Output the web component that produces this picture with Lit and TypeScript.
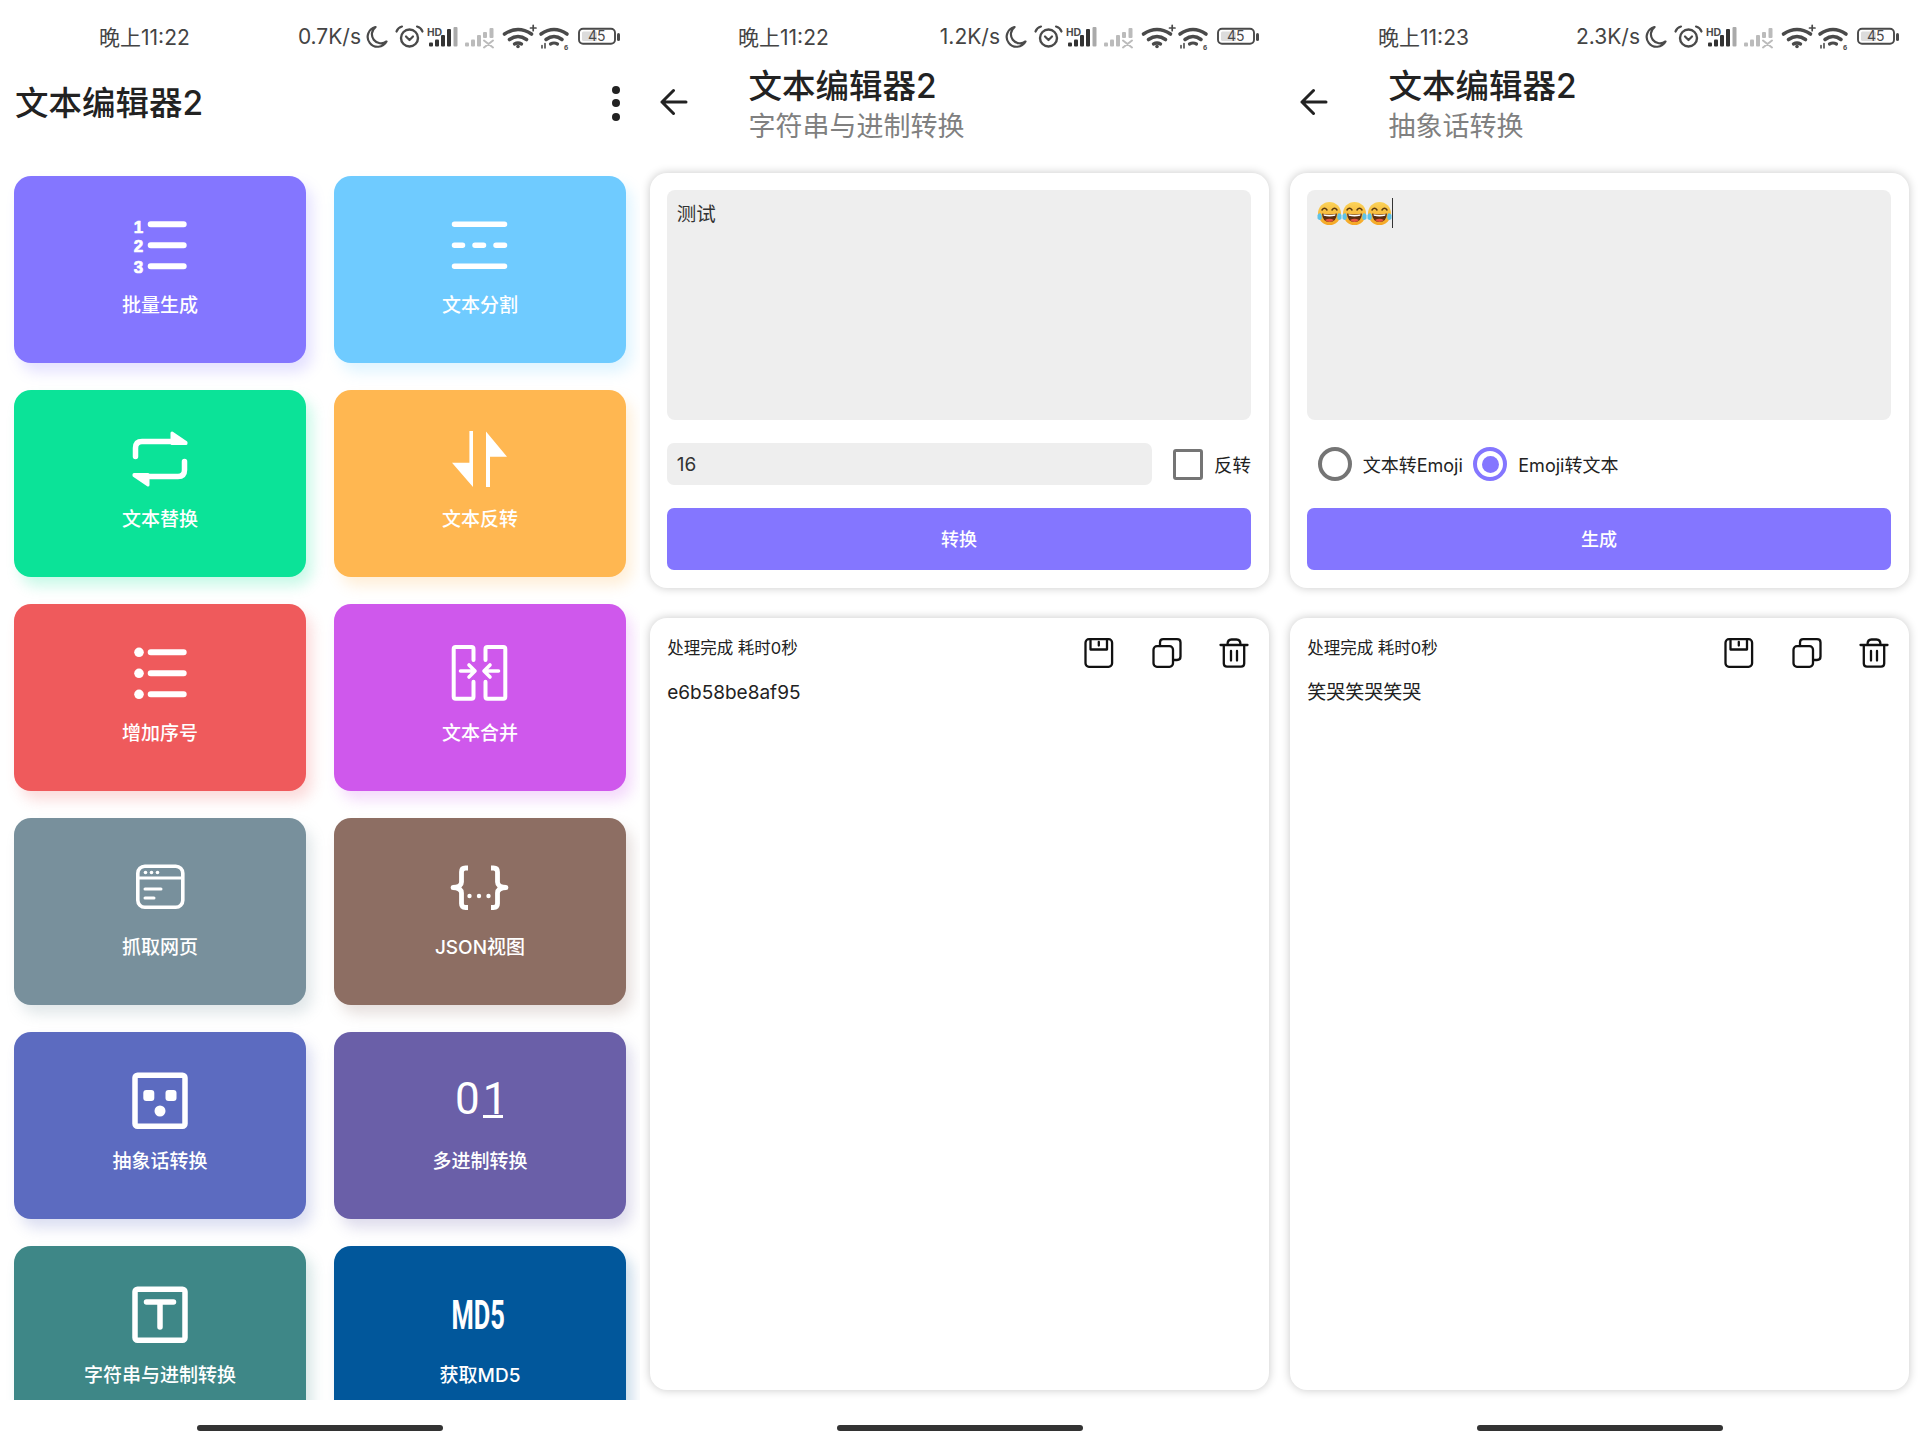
import { html, svg, css, LitElement, TemplateResult, SVGTemplateResult } from "lit";
import { customElement, property } from "lit/decorators.js";

const box = (body: SVGTemplateResult) => html`<svg class="icon" viewBox="0 0 72 72" fill="none" stroke="#fff" stroke-linecap="round" stroke-linejoin="round">${body}</svg>`;

const icons: Record<string, TemplateResult> = {
    numbered: box(svg`
        <path d="M26.7 16.3H59.7M26.7 37.3H59.7M26.7 58.3H59.7" stroke-width="6"/>
        <g fill="#fff" stroke="#fff" stroke-width="0.7" font-family="Liberation Sans" font-weight="700" font-size="17" text-anchor="middle">
            <text x="14.5" y="24.5">1</text><text x="14.5" y="44">2</text><text x="14.5" y="64.5">3</text>
        </g>`),
    split: box(svg`
        <path d="M10.5 16.3H60.5M10.5 58.3H60.5" stroke-width="5.5"/>
        <path d="M10.5 37.3H18.5M31 37.3H39.5M52 37.3H60.5" stroke-width="5.5"/>`),
    repeat: box(svg`
        <path d="M11.5 34.5V26Q11.5 19.5 18 19.5H50" stroke-width="5.5"/>
        <path d="M48 11L62 20.5V21.5H48Z" fill="#fff" stroke-width="3"/>
        <path d="M60.5 39.5V48Q60.5 54.5 54 54.5H22" stroke-width="5.5"/>
        <path d="M24 63L10 53.5V52.5H24Z" fill="#fff" stroke-width="3"/>`),
    swap: box(svg`
        <path d="M25.4 9H29V65L8 40.7H25.4Z" fill="#fff" stroke="none"/>
        <path d="M42 9.5L63 34.7H46V65H42Z" fill="#fff" stroke="none"/>`),
    bullets: box(svg`
        <path d="M26.7 16.3H59.7M26.7 37.3H59.7M26.7 58.3H59.7" stroke-width="6"/>
        <g fill="#fff" stroke="none"><circle cx="15" cy="16.3" r="4.8"/><circle cx="15" cy="37.3" r="4.8"/><circle cx="15" cy="58.3" r="4.8"/></g>`),
    merge: box(svg`
        <path d="M29.5 24V13Q29.5 11 27.5 11H11.7Q9.7 11 9.7 13V60.7Q9.7 62.7 11.7 62.7H27.5Q29.5 62.7 29.5 60.7V45.7" stroke-width="4"/>
        <path d="M41.5 24V13Q41.5 11 43.5 11H59.3Q61.3 11 61.3 13V60.7Q61.3 62.7 59.3 62.7H43.5Q41.5 62.7 41.5 60.7V45.7" stroke-width="4"/>
        <path d="M16.5 35H30M25 29L31 35L25 41M54.5 35H41M46 29L40 35L46 41" stroke-width="3.6"/>`),
    web: box(svg`
        <rect x="13.8" y="16.3" width="45" height="41" rx="7" stroke-width="3.6"/>
        <path d="M14 28H58.5" stroke-width="3"/>
        <g fill="#fff" stroke="none"><circle cx="21.5" cy="22.5" r="1.8"/><circle cx="27.5" cy="22.5" r="1.8"/><circle cx="33.5" cy="22.5" r="1.8"/></g>
        <path d="M21 39H37M21 48H30" stroke-width="3"/>`),
    braces: box(svg`
        <path d="M24 18H21.5Q17.5 18 17.5 22V32Q17.5 37 9 37.5Q17.5 38 17.5 43V53.5Q17.5 57.5 21.5 57.5H24" stroke-width="4.8" stroke-linecap="butt"/>
        <path d="M47 18H49.5Q53.5 18 53.5 22V32Q53.5 37 62 37.5Q53.5 38 53.5 43V53.5Q53.5 57.5 49.5 57.5H47" stroke-width="4.8" stroke-linecap="butt"/>
        <g fill="#fff" stroke="none"><circle cx="25.5" cy="46" r="2.2"/><circle cx="35" cy="46" r="2.2"/><circle cx="44.5" cy="46" r="2.2"/></g>`),
    face: box(svg`
        <rect x="11" y="11.2" width="50" height="51" rx="2.5" stroke-width="5.5"/>
        <g fill="#fff" stroke="none">
            <rect x="19.3" y="26" width="11" height="11" rx="3"/><rect x="41.5" y="26" width="11" height="11" rx="3"/><circle cx="36" cy="47" r="5.5"/>
        </g>`),
    binary: html`<div class="digits"><div>0</div><div class="one">1</div></div>`,
    textbox: box(svg`
        <rect x="11" y="11.2" width="50" height="51" rx="2.5" stroke-width="5.5"/>
        <path d="M22.5 24H49.5M36 24V49" stroke-width="5.5"/>`),
    md5: box(svg`
        <text transform="translate(7.5 51) scale(0.62 1)" fill="#fff" stroke="none" font-family="Roboto" font-weight="700" font-size="41">MD5</text>`),
};

const tools = [
    { label: "批量生成", color: "#8476ff", icon: "numbered" },
    { label: "文本分割", color: "#6fcbff", icon: "split" },
    { label: "文本替换", color: "#0be398", icon: "repeat" },
    { label: "文本反转", color: "#ffb751", icon: "swap" },
    { label: "增加序号", color: "#ef5a5c", icon: "bullets" },
    { label: "文本合并", color: "#cf58ec", icon: "merge" },
    { label: "抓取网页", color: "#78909c", icon: "web" },
    { label: "JSON视图", color: "#8d6e63", icon: "braces" },
    { label: "抽象话转换", color: "#5c6bc0", icon: "face" },
    { label: "多进制转换", color: "#6a5fa8", icon: "binary" },
    { label: "字符串与进制转换", color: "#3e8787", icon: "textbox" },
    { label: "获取MD5", color: "#01579b", icon: "md5" },
];

const statusIcons = html`
    <svg class="sys" viewBox="0 0 254 30" fill="none" stroke="#4a4a4a" stroke-linecap="round" stroke-linejoin="round">
        <path d="M9.5 5A10 10 0 1 0 20.5 19.5A9 9 0 0 1 9.5 5Z" stroke-width="2.2"/>
        <circle cx="43.5" cy="16" r="8.5" stroke-width="2.4"/>
        <path d="M30.5 9.5Q32 5.5 36 4.5M56.5 9.5Q55 5.5 51 4.5" stroke-width="2.2"/>
        <path d="M40 14.5L43.5 18L47 14.5" stroke-width="2.2"/>
        <text x="61" y="13.5" font-family="Liberation Sans" font-weight="700" font-size="10.5" fill="#4a4a4a" stroke="none">HD</text>
        <g stroke="none" fill="#333">
            <rect x="63" y="20.5" width="4" height="4" rx="1"/><rect x="69" y="17.5" width="4" height="7" rx="1"/>
            <rect x="75" y="13" width="4" height="11.5" rx="1"/><rect x="81" y="7" width="4" height="17.5" rx="1"/>
        </g>
        <rect x="87.5" y="5" width="4" height="19.5" rx="1" fill="#aaa" stroke="none"/>
        <g stroke="none" fill="#bbb">
            <rect x="99" y="20.5" width="4" height="4" rx="1"/><rect x="105" y="17.5" width="4" height="7" rx="1"/>
            <rect x="111" y="13" width="4" height="11.5" rx="1"/><rect x="117" y="10" width="4" height="6" rx="1"/>
            <rect x="123.5" y="6" width="4" height="10" rx="1"/>
        </g>
        <path d="M118 18.5L127 25.5M127 18.5L118 25.5" stroke="#bbb" stroke-width="2"/>
        <path d="M138.5 12Q152 3 165.5 12M143.5 17.5Q152 11.5 160.5 17.5" stroke-width="3.6"/>
        <path d="M148.5 22Q152 20 155.5 22" stroke-width="3.4"/>
        <circle cx="152" cy="24.5" r="1.8" fill="#4a4a4a" stroke="none"/>
        <path d="M164.5 6H170M167.2 3.3V8.7" stroke-width="1.7"/>
        <path d="M175 12Q188 3 201 12M180 17.5Q188 11.5 196 17.5" stroke-width="3.6"/>
        <path d="M184.5 22Q188 20 191.5 22" stroke-width="3.2"/>
        <path d="M176 26V23.5M179 26V21.5" stroke-width="1.6"/>
        <text x="198" y="27.5" font-family="Liberation Sans" font-weight="700" font-size="7.5" fill="#4a4a4a" stroke="none">6</text>
        <rect x="213" y="6.8" width="36" height="15" rx="4" stroke-width="1.9"/>
        <rect x="216" y="9.5" width="15" height="9.6" rx="1.5" fill="#dcdcdc" stroke="none"/>
        <text x="230.8" y="19.3" text-anchor="middle" font-family="Inter" font-size="14" fill="#4a4a4a" stroke="none">45</text>
        <rect x="251" y="11" width="3" height="8" rx="1.5" fill="#4a4a4a" stroke="none"/>
    </svg>`;

const backArrow = html`
    <svg class="back" viewBox="0 0 28 28" fill="none" stroke="#222" stroke-width="3" stroke-linecap="round" stroke-linejoin="round">
        <path d="M26 14H2M13.5 2.5L2 14L13.5 25.5"/>
    </svg>`;

const emoji = html`
    <svg class="emoji" viewBox="0 0 25 25">
        <defs><linearGradient id="g" x1="0" y1="0" x2="0" y2="1"><stop offset="0" stop-color="#fbd35a"/><stop offset="1" stop-color="#f5a623"/></linearGradient></defs>
        <circle cx="12.5" cy="12.5" r="11.5" fill="url(#g)"/>
        <path d="M5 9Q7.5 5.5 10 9M15 9Q17.5 5.5 20 9" fill="none" stroke="#5b3a10" stroke-width="1.5" stroke-linecap="round"/>
        <path d="M5 12.5Q12.5 14.5 20 12.5Q19.5 21 12.5 21Q5.5 21 5 12.5Z" fill="#5b2d0e"/>
        <path d="M6.5 13.2Q12.5 14.8 18.5 13.2L18.2 14.8Q12.5 16 6.8 14.8Z" fill="#fff"/>
        <path d="M8 19Q12.5 16.5 17 19Q15 21 12.5 21Q10 21 8 19Z" fill="#e5553f"/>
        <path d="M0.5 14Q2 11.5 3.8 12.5Q5.5 15 4.5 18Q2 20 0.5 17.5Z" fill="#5fc3e8"/>
        <path d="M24.5 14Q23 11.5 21.2 12.5Q19.5 15 20.5 18Q23 20 24.5 17.5Z" fill="#5fc3e8"/>
    </svg>`;

const actions = html`
    <div class="actions">
        <svg viewBox="0 0 30 30" fill="none" stroke="#111" stroke-width="2.3" stroke-linejoin="round" stroke-linecap="round">
            <rect x="1.5" y="1.2" width="26.6" height="27.6" rx="3.5"/>
            <path d="M6.5 1.5V11.5H23V1.5M14.8 4V7.5"/>
        </svg>
        <svg viewBox="0 0 30 30" fill="none" stroke="#111" stroke-width="2.3" stroke-linejoin="round" stroke-linecap="round">
            <rect x="1.5" y="8.2" width="19.5" height="20.6" rx="3.5"/>
            <path d="M8 8V4.5Q8 1.2 11.3 1.2H25Q28.5 1.2 28.5 4.5V18.5Q28.5 22 25 22H21.5"/>
        </svg>
        <svg viewBox="0 0 30 30" fill="none" stroke="#111" stroke-width="2.3" stroke-linejoin="round" stroke-linecap="round">
            <path d="M1.5 7H28.5M4.8 7.5V25.5Q4.8 28.6 8 28.6H22Q25.2 28.6 25.2 25.5V7.5M8.5 6.5Q8.5 1.5 12.5 1.5H17.5Q21.5 1.5 21.5 6.5"/>
            <path d="M12 13V22.5M18 13V22.5"/>
        </svg>
    </div>`;

@customElement("status-bar")
export class StatusBar extends LitElement {
    static styles = css`
        :host {
            display: flex;
            align-items: center;
            height: 42px;
            margin-top: 16px;
            padding: 0 20px 0 99px;
            color: #444;
            font-size: 21px;
            font-family: Inter, "Noto Sans CJK SC", sans-serif;
        }

        :host([sub]) {
            padding: 0 21px 0 98px;
        }

        span {
            margin-bottom: 2px;
        }

        .speed {
            margin-left: auto;
            margin-right: 5px;
        }

        .sys {
            width: 254px;
            height: 30px;
            flex: none;
        }
    `;

    @property() time = "";
    @property() speed = "";

    render() {
        return html`<span>${this.time}</span><span class="speed">${this.speed}</span>${statusIcons}`;
    }
}

@customElement("app-root")
export class AppRoot extends LitElement {
    static styles = css`
        :host {
            display: grid;
            grid-template-columns: repeat(3, 640px);
            height: 1440px;
            background: #fff;
            font-family: Inter, "Noto Sans CJK SC", sans-serif;
            color: #222;
        }

        .panel {
            display: flex;
            flex-direction: column;
            height: 1440px;
            overflow: hidden;
        }

        .home {
            align-self: center;
            width: 246px;
            height: 6px;
            flex: none;
            margin-top: auto;
            margin-bottom: 9.5px;
            border-radius: 3px;
            background: #333;
        }

        .toolbar {
            display: flex;
            align-items: center;
            justify-content: space-between;
            height: 90px;
            padding: 0 20px 0 15px;
            flex: none;
        }

        .title {
            font-size: 33.5px;
            line-height: 40px;
            font-weight: 500;
            color: #222;
        }

        .menu {
            display: flex;
            flex-direction: column;
            gap: 5.5px;
        }

        .menu i {
            width: 8px;
            height: 8px;
            border-radius: 50%;
            background: #222;
        }

        .grid {
            display: grid;
            grid-template-columns: 292px 292px;
            grid-auto-rows: 187px;
            gap: 27px 28px;
            height: 1252px;
            flex: none;
            box-sizing: border-box;
            padding: 28px 14px 0;
            overflow: hidden;
        }

        .tool {
            display: flex;
            flex-direction: column;
            align-items: center;
            box-sizing: border-box;
            padding-top: 32px;
            border-radius: 17px;
            color: #fff;
            background: var(--c);
            box-shadow: 6px 9px 14px color-mix(in srgb, var(--c) 22%, transparent);
        }

        .icon {
            width: 72px;
            height: 72px;
            flex: none;
        }

        .digits {
            display: flex;
            align-items: flex-start;
            gap: 3px;
            width: 72px;
            height: 72px;
            box-sizing: border-box;
            padding: 20px 0 0 11px;
            flex: none;
            font-family: Roboto, sans-serif;
            font-size: 44px;
            line-height: 31px;
        }

        .digits .one {
            width: 20px;
            border-bottom: 3px solid #fff;
            text-align: center;
        }

        .tool span {
            margin-top: 14px;
            font-size: 19px;
            line-height: 24px;
            font-weight: 500;
        }

        .head {
            display: flex;
            height: 87px;
            flex: none;
            padding-left: 20px;
        }

        .back {
            width: 28px;
            height: 28px;
            align-self: center;
            flex: none;
        }

        .names {
            margin-left: 60.5px;
            padding-top: 7.5px;
        }

        .sub {
            margin-top: 3.5px;
            font-size: 27px;
            line-height: 36px;
            color: #808080;
        }

        .card {
            margin: 0 11.4px 0 10px;
            box-sizing: border-box;
            border-radius: 17px;
            background: #fff;
            box-shadow: 0 0 10px rgba(0, 0, 0, 0.22);
            flex: none;
        }

        .form {
            display: flex;
            flex-direction: column;
            height: 415.4px;
            margin-top: 27.6px;
            padding: 17.5px 17.6px 0 17.2px;
        }

        .area {
            height: 230px;
            box-sizing: border-box;
            padding: 10px 10px 10px 9.5px;
            border-radius: 8px;
            background: #eee;
            font-size: 19.5px;
            line-height: 28px;
            color: #333;
        }

        .typed {
            display: flex;
            align-items: center;
            height: 26px;
        }

        .emoji {
            width: 25px;
            height: 25px;
            flex: none;
        }

        .caret {
            width: 1.5px;
            height: 30px;
            flex: none;
            background: #333;
        }

        .row {
            display: flex;
            align-items: center;
            height: 42px;
            margin-top: 23px;
        }

        .field {
            flex: 1;
            height: 42px;
            box-sizing: border-box;
            padding-left: 9.5px;
            border-radius: 7px;
            background: #eee;
            font-size: 19px;
            line-height: 44px;
            color: #333;
        }

        .check {
            width: 30px;
            height: 31px;
            box-sizing: border-box;
            margin-left: 21px;
            border: 3.6px solid #757575;
            border-radius: 3px;
            flex: none;
        }

        .row label {
            font-size: 18px;
            color: #222;
            flex: none;
        }

        .row .check + label {
            margin-left: 11.5px;
            font-size: 18.5px;
        }

        .radio {
            display: flex;
            align-items: center;
            justify-content: center;
            width: 34px;
            height: 34px;
            box-sizing: border-box;
            margin-left: 10.5px;
            border: 4px solid #757575;
            border-radius: 50%;
            flex: none;
        }

        .radio + label {
            margin-left: 11px;
        }

        .radio.on {
            border-color: #8476ff;
        }

        .radio.on i {
            width: 17px;
            height: 17px;
            border-radius: 50%;
            background: #8476ff;
        }

        .run {
            height: 61.5px;
            margin-top: 23px;
            border-radius: 7px;
            background: #8476ff;
            color: #fff;
            font-size: 18px;
            font-weight: 500;
            line-height: 63px;
            text-align: center;
        }

        .result {
            height: 772px;
            margin-top: 30px;
            padding: 18px 19.6px 0 17.2px;
        }

        .result-head {
            display: flex;
            align-items: flex-start;
            justify-content: space-between;
            height: 32px;
            margin-bottom: 10px;
        }

        .done {
            font-size: 16.5px;
            line-height: 24px;
            color: #222;
        }

        .actions {
            display: flex;
            gap: 37.5px;
            padding-top: 2px;
        }

        .actions svg {
            width: 30px;
            height: 30px;
        }

        .output {
            font-size: 19px;
            line-height: 30px;
            color: #222;
        }
    `;

    renderHome() {
        return html`
            <div class="panel">
                <status-bar time="晚上11:22" speed="0.7K/s"></status-bar>
                <div class="toolbar">
                    <div class="title">文本编辑器2</div>
                    <div class="menu"><i></i><i></i><i></i></div>
                </div>
                <div class="grid">
                    ${tools.map((t) => html`
                    <div class="tool" style="--c: ${t.color}">
                        ${icons[t.icon]}
                        <span>${t.label}</span>
                    </div>
                    `)}
                </div>
                <div class="home"></div>
            </div>
        `;
    }

    renderDetail(time: string, speed: string, sub: string, area: TemplateResult, row: TemplateResult, action: string, output: string) {
        return html`
            <div class="panel">
                <status-bar sub time="${time}" speed="${speed}"></status-bar>
                <div class="head">
                    ${backArrow}
                    <div class="names">
                        <div class="title">文本编辑器2</div>
                        <div class="sub">${sub}</div>
                    </div>
                </div>
                <div class="card form">
                    <div class="area">${area}</div>
                    <div class="row">${row}</div>
                    <div class="run">${action}</div>
                </div>
                <div class="card result">
                    <div class="result-head">
                        <div class="done">处理完成 耗时0秒</div>
                        ${actions}
                    </div>
                    <div class="output">${output}</div>
                </div>
                <div class="home"></div>
            </div>
        `;
    }

    render() {
        return html`
            ${this.renderHome()}
            ${this.renderDetail("晚上11:22", "1.2K/s", "字符串与进制转换",
                html`测试`,
                html`<div class="field">16</div><div class="check"></div><label>反转</label>`,
                "转换", "e6b58be8af95")}
            ${this.renderDetail("晚上11:23", "2.3K/s", "抽象话转换",
                html`<div class="typed">${emoji}${emoji}${emoji}<div class="caret"></div></div>`,
                html`<div class="radio"></div><label>文本转Emoji</label><div class="radio on"><i></i></div><label>Emoji转文本</label>`,
                "生成", "笑哭笑哭笑哭")}
        `;
    }
}
